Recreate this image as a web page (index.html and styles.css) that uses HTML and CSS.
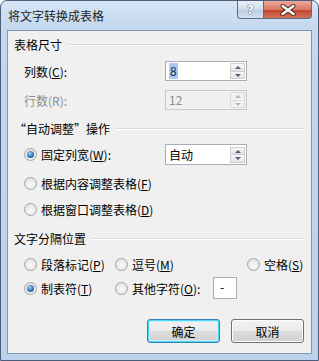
FILE: index.html
```html
<!DOCTYPE html>
<html lang="zh-CN">
<head>
    <meta charset="UTF-8">
    <title>将文字转换成表格</title>
    <link rel="stylesheet" href="styles.css">
</head>
<body>
    <div class="window">
        <div class="titlebar">
            <span class="title">将文字转换成表格</span>
            <div class="caption-buttons">
                <div class="cap-btn help">?</div>
                <div class="cap-btn close">
                    <svg width="16" height="12" viewBox="0 0 16 12">
                        <path d="M2.5 2 L13.5 10 M13.5 2 L2.5 10" stroke="#4a2418" stroke-width="4.2" stroke-linecap="round"/>
                        <path d="M2.5 2 L13.5 10 M13.5 2 L2.5 10" stroke="#ffffff" stroke-width="2.4" stroke-linecap="round"/>
                    </svg>
                </div>
            </div>
        </div>

        <div class="client">
            <!-- 表格尺寸 -->
            <div class="group-title">表格尺寸</div>
            <div class="row row-cols">
                <span class="field-label">列数(<u>C</u>):</span>
                <div class="spinner">
                    <span class="value"><span class="selected">8</span></span>
                    <div class="spin-buttons">
                        <div class="spin up"></div>
                        <div class="spin down"></div>
                    </div>
                </div>
            </div>
            <div class="row row-rows disabled">
                <span class="field-label">行数(R):</span>
                <div class="spinner">
                    <span class="value">12</span>
                    <div class="spin-buttons">
                        <div class="spin up"></div>
                        <div class="spin down"></div>
                    </div>
                </div>
            </div>

            <!-- 自动调整 -->
            <div class="group-title group-gap">“自动调整”操作</div>
            <div class="row row-fixed">
                <label class="option wide"><span class="radio checked"></span><span>固定列宽(<u>W</u>):</span></label>
                <div class="spinner">
                    <span class="value">自动</span>
                    <div class="spin-buttons">
                        <div class="spin up"></div>
                        <div class="spin down"></div>
                    </div>
                </div>
            </div>
            <div class="row row-content">
                <label class="option"><span class="radio"></span><span>根据内容调整表格(<u>F</u>)</span></label>
            </div>
            <div class="row row-window">
                <label class="option"><span class="radio"></span><span>根据窗口调整表格(<u>D</u>)</span></label>
            </div>

            <!-- 文字分隔位置 -->
            <div class="group-title group-gap2">文字分隔位置</div>
            <div class="row row-sep1">
                <label class="option col1"><span class="radio"></span><span>段落标记(<u>P</u>)</span></label>
                <label class="option col2"><span class="radio"></span><span>逗号(<u>M</u>)</span></label>
                <label class="option"><span class="radio"></span><span>空格(<u>S</u>)</span></label>
            </div>
            <div class="row row-sep2">
                <label class="option col1"><span class="radio checked"></span><span>制表符(<u>T</u>)</span></label>
                <label class="option col2b"><span class="radio"></span><span>其他字符(<u>O</u>):</span></label>
                <div class="char-box">-</div>
            </div>

            <div class="button-row">
                <div class="btn default">确定</div>
                <div class="btn">取消</div>
            </div>
        </div>
    </div>
</body>
</html>
```

FILE: styles.css
```css
body {
    margin: 0;
    padding: 0;
    background: #ffffff;
    font-family: "Noto Sans CJK SC", "Noto Sans", sans-serif;
    font-size: 12px;
    color: #000000;
}

.window {
    width: 319px;
    height: 361px;
    box-sizing: border-box;
    border: 1px solid #4a5e7c;
    border-radius: 7px 7px 0 0;
    background: linear-gradient(#d6e5f5, #c3d8ef 28px, #bcd2ea);
    padding: 0 6px 6px 6px;
    display: flex;
    flex-direction: column;
}

/* title bar */
.titlebar {
    height: 29px;
    display: flex;
    align-items: flex-start;
}
.title {
    line-height: 29px;
    padding-left: 1px;
    color: #1e1e1e;
}
.caption-buttons {
    margin-left: auto;
    display: flex;
}
.cap-btn {
    height: 18px;
    box-sizing: border-box;
    border: 1px solid #5a6c88;
    border-top: none;
    display: flex;
    align-items: center;
    justify-content: center;
}
.help {
    width: 26px;
    border-right: none;
    border-radius: 0 0 0 4px;
    background: linear-gradient(#e9f0f8, #cfdcec 50%, #b9cbe1 51%, #d3e1f0);
    color: #ffffff;
    font-family: "DejaVu Sans", sans-serif;
    font-weight: bold;
    font-size: 12px;
    text-shadow: 0 0 1px #3b4a60, 0 0 1px #3b4a60;
}
.close {
    width: 49px;
    border-radius: 0 0 4px 0;
    background: linear-gradient(#e9a999, #d77a64 50%, #c1442c 51%, #d2735a);
}

/* client area */
.client {
    flex: 1;
    border: 1px solid #8496b0;
    background: #f0f0f0;
    padding: 6px 5px 0 6px;
}

.group-title {
    height: 16px;
    line-height: 16px;
    display: flex;
    align-items: center;
    white-space: nowrap;
}
.group-title::after {
    content: "";
    flex: 1;
    margin-left: 5px;
    border-top: 1px solid #d5dfe5;
    border-bottom: 1px solid #ffffff;
}
.group-gap { margin-top: 11px; }
.group-gap2 { margin-top: 12px; }

.row {
    display: flex;
    align-items: center;
    height: 20px;
    padding-left: 10px;
}
.row-cols { margin-top: 8px; }
.row-rows { margin-top: 9px; }
.row-fixed { margin-top: 7px; height: 21px; }
.row-content { margin-top: 8px; }
.row-window { margin-top: 6px; }
.row-sep1 { margin-top: 7px; }
.row-sep2 { margin-top: 3px; height: 22px; }

.field-label {
    width: 141px;
}
.disabled .field-label { color: #8d8d8d; }

/* spinner */
.spinner {
    width: 82px;
    height: 20px;
    box-sizing: border-box;
    border: 1px solid #abadb3;
    background: #ffffff;
    display: flex;
    align-items: center;
}
.row-fixed .spinner { height: 21px; }
.spinner .value {
    flex: 1;
    padding-left: 3px;
    line-height: 16px;
}
.selected {
    display: inline-block;
    background: #a9c9ee;
    color: #102a5c;
    padding: 0 1px;
    line-height: 16px;
}
.spin-buttons {
    width: 15px;
    height: 16px;
    margin-right: 1px;
    display: flex;
    flex-direction: column;
}
.spin {
    flex: 1;
    box-sizing: border-box;
    border: 1px solid #cfcfcf;
    background: linear-gradient(#f7f7f7, #e4e4e4);
    position: relative;
}
.spin.down { border-top: none; }
.spin::after {
    content: "";
    position: absolute;
    left: 4px;
    top: 2px;
    border-left: 3px solid transparent;
    border-right: 3px solid transparent;
}
.spin.up::after { border-bottom: 3px solid #4e5f7d; }
.spin.down::after { border-top: 3px solid #4e5f7d; top: 2px; }

.disabled .spinner {
    background: #f0f0f0;
    border-color: #c9c9c9;
    color: #8d8d8d;
}
.disabled .spin { border-color: #dcdcdc; background: #f2f2f2; }
.disabled .spin.up::after { border-bottom-color: #b8b8b8; }
.disabled .spin.down::after { border-top-color: #b8b8b8; }

/* radio options */
.option {
    display: flex;
    align-items: center;
    gap: 4px;
    white-space: nowrap;
}
.option.wide { width: 141px; }
.col1 { width: 91px; }
.col2 { width: 132px; }
.col2b { width: 98px; }

.radio {
    width: 13px;
    height: 13px;
    box-sizing: border-box;
    border-radius: 50%;
    border: 1px solid #a2a4a6;
    background: radial-gradient(circle at 50% 60%, #fbfbfb, #e4e4e4 70%, #d6d6d6);
    display: flex;
    align-items: center;
    justify-content: center;
}
.radio.checked::after {
    content: "";
    width: 7px;
    height: 7px;
    border-radius: 50%;
    background: radial-gradient(circle at 40% 35%, #9ad6fb, #2a6cb6 60%, #163f7a);
}

.char-box {
    width: 24px;
    height: 22px;
    box-sizing: border-box;
    border: 1px solid #abadb3;
    background: #ffffff;
    padding-left: 6px;
    line-height: 18px;
}

/* buttons */
.button-row {
    display: flex;
    justify-content: flex-end;
    gap: 11px;
    margin-top: 20px;
    padding-right: 2px;
}
.btn {
    width: 73px;
    height: 24px;
    box-sizing: border-box;
    border: 1px solid #707070;
    border-radius: 3px;
    background: linear-gradient(#f2f2f2, #ebebeb 50%, #dddddd 51%, #cfcfcf);
    box-shadow: inset 0 0 0 1px #fcfcfc;
    display: flex;
    align-items: center;
    justify-content: center;
}
.btn.default {
    border-color: #3c7fb1;
    box-shadow: inset 0 0 0 1px #48d8f8, inset 0 0 0 2px #c8ecfa;
}
```
